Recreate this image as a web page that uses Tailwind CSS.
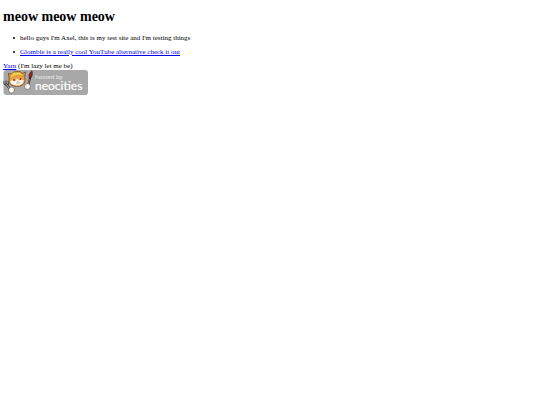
<!DOCTYPE html>
<html lang="en">
  <head>
    <meta charset="UTF-8" />
    <meta name="viewport" content="width=device-width, initial-scale=1.0" />
    <title>meow meow meow</title>
    <script src="https://cdn.jsdelivr.net/npm/@tailwindcss/browser@4"></script>
  </head>
  <body
    class="bg-white text-black px-[3px] pt-[9px] font-['Liberation_Serif',serif] text-[7px] leading-[8px]"
  >
    <h1 class="text-[14px] leading-4 font-bold">meow meow meow</h1>

    <ul class="pl-[10px] mt-[9px] mb-[6px] flex flex-col gap-[6px]">
      <li class="flex items-center gap-[5px] before:size-[2px] before:rounded-full before:bg-black">
        hello guys I'm Axel, this is my test site and I'm testing things
      </li>
      <li class="flex items-center gap-[5px] before:size-[2px] before:rounded-full before:bg-black">
        <a href="#" class="text-[#0000ee] underline"
          >Glomble is a really cool YouTube alternative check it out</a
        >
      </li>
    </ul>

    <p><a href="#" class="text-[#0000ee] underline">Yarn</a> (I'm lazy let me be)</p>

    <a href="#" class="block w-fit" aria-label="Hosted by Neocities">
      <svg class="block w-[85px] h-[25px]" viewBox="0 0 85 25">
        <rect x="0.5" width="84.5" height="25" rx="3" fill="#a8a8a8" />

        <!-- fork -->
        <path d="M3.5 14.5 7 19" stroke="#333" stroke-width="2.2" stroke-linecap="round" />
        <path d="M1 11v3l2 1.500 2.500-1-.5-3.500M3 10.500v4" fill="none" stroke="#444" stroke-width="1" />
        <path d="M3.500 14.500 6.500 18.500" stroke="#ccc" stroke-width="0.9" />

        <!-- brush -->
        <path d="M27 8 25 16" stroke="#3a1f18" stroke-width="2" stroke-linecap="round" />
        <path d="M26.500 9 25.500 14" stroke="#c08a68" stroke-width="0.8" />
        <path d="M26 7.500C25.500 4.500 27 2.500 29 .8c.8 2.800.3 5.200-1 7.200z" fill="#8c2926" stroke="#42201c" stroke-width="0.6" />

        <!-- cat -->
        <path
          d="M6.200 8 5.300 3.500 8.500 4C11 .8 16.500.3 19.500 3.500l2.800-1.500-.6 5.500c1.300 4-.7 7.300-4.700 8.600C12 17 7 15.500 6 12z"
          fill="#f0a04c"
          stroke="#6b4020"
          stroke-width="0.8"
          stroke-linejoin="round"
        />
        <path d="M7 11.500c1.500-1.500 3.500-1.500 5.500-.5l1.500-2.500 2 2c2-1 3.500-.8 4.800 0-.5 3.300-3.300 4.900-6.800 5.100-3.500 0-6.300-1.300-7-4.100z" fill="#fff3e6" />
        <path d="M6.800 6.800C8.500 1.200 17 .6 20.500 5l.3 2C17 4.800 11 5.500 7.500 8.600z" fill="#efc53f" stroke="#a57a22" stroke-width="0.5" />
        <path d="M10 4.500 12 3M14 3.500l3-.3" stroke="#fbe88a" stroke-width="0.8" />
        <ellipse cx="11" cy="10" rx="0.7" ry="1" fill="#40291c" />
        <ellipse cx="17.500" cy="9" rx="0.7" ry="1" fill="#40291c" />
        <path d="m14 11.300 1.500-.2-.7 1z" fill="#a4503c" />
        <path d="M13 13q1.400.8 1.900-.6 1 1.200 2.200.1" fill="none" stroke="#8d6650" stroke-width="0.5" />

        <!-- paws -->
        <circle cx="8.500" cy="20" r="3" fill="#fff" stroke="#5c4331" stroke-width="0.6" />
        <circle cx="24.500" cy="16.500" r="2.900" fill="#fff" stroke="#5c4331" stroke-width="0.6" />
        <path d="M10 19v2M23.500 16v1.500" stroke="#e6bf97" stroke-width="0.6" />

        <text x="32" y="9" fill="#eee" font-family="'Open Sans', sans-serif" font-size="6">hosted by</text>
        <text x="32" y="20" fill="#fff" stroke="#fff" stroke-width="0.2" font-family="'Lato', sans-serif" font-size="12">neocities</text>
      </svg>
    </a>
  </body>
</html>
